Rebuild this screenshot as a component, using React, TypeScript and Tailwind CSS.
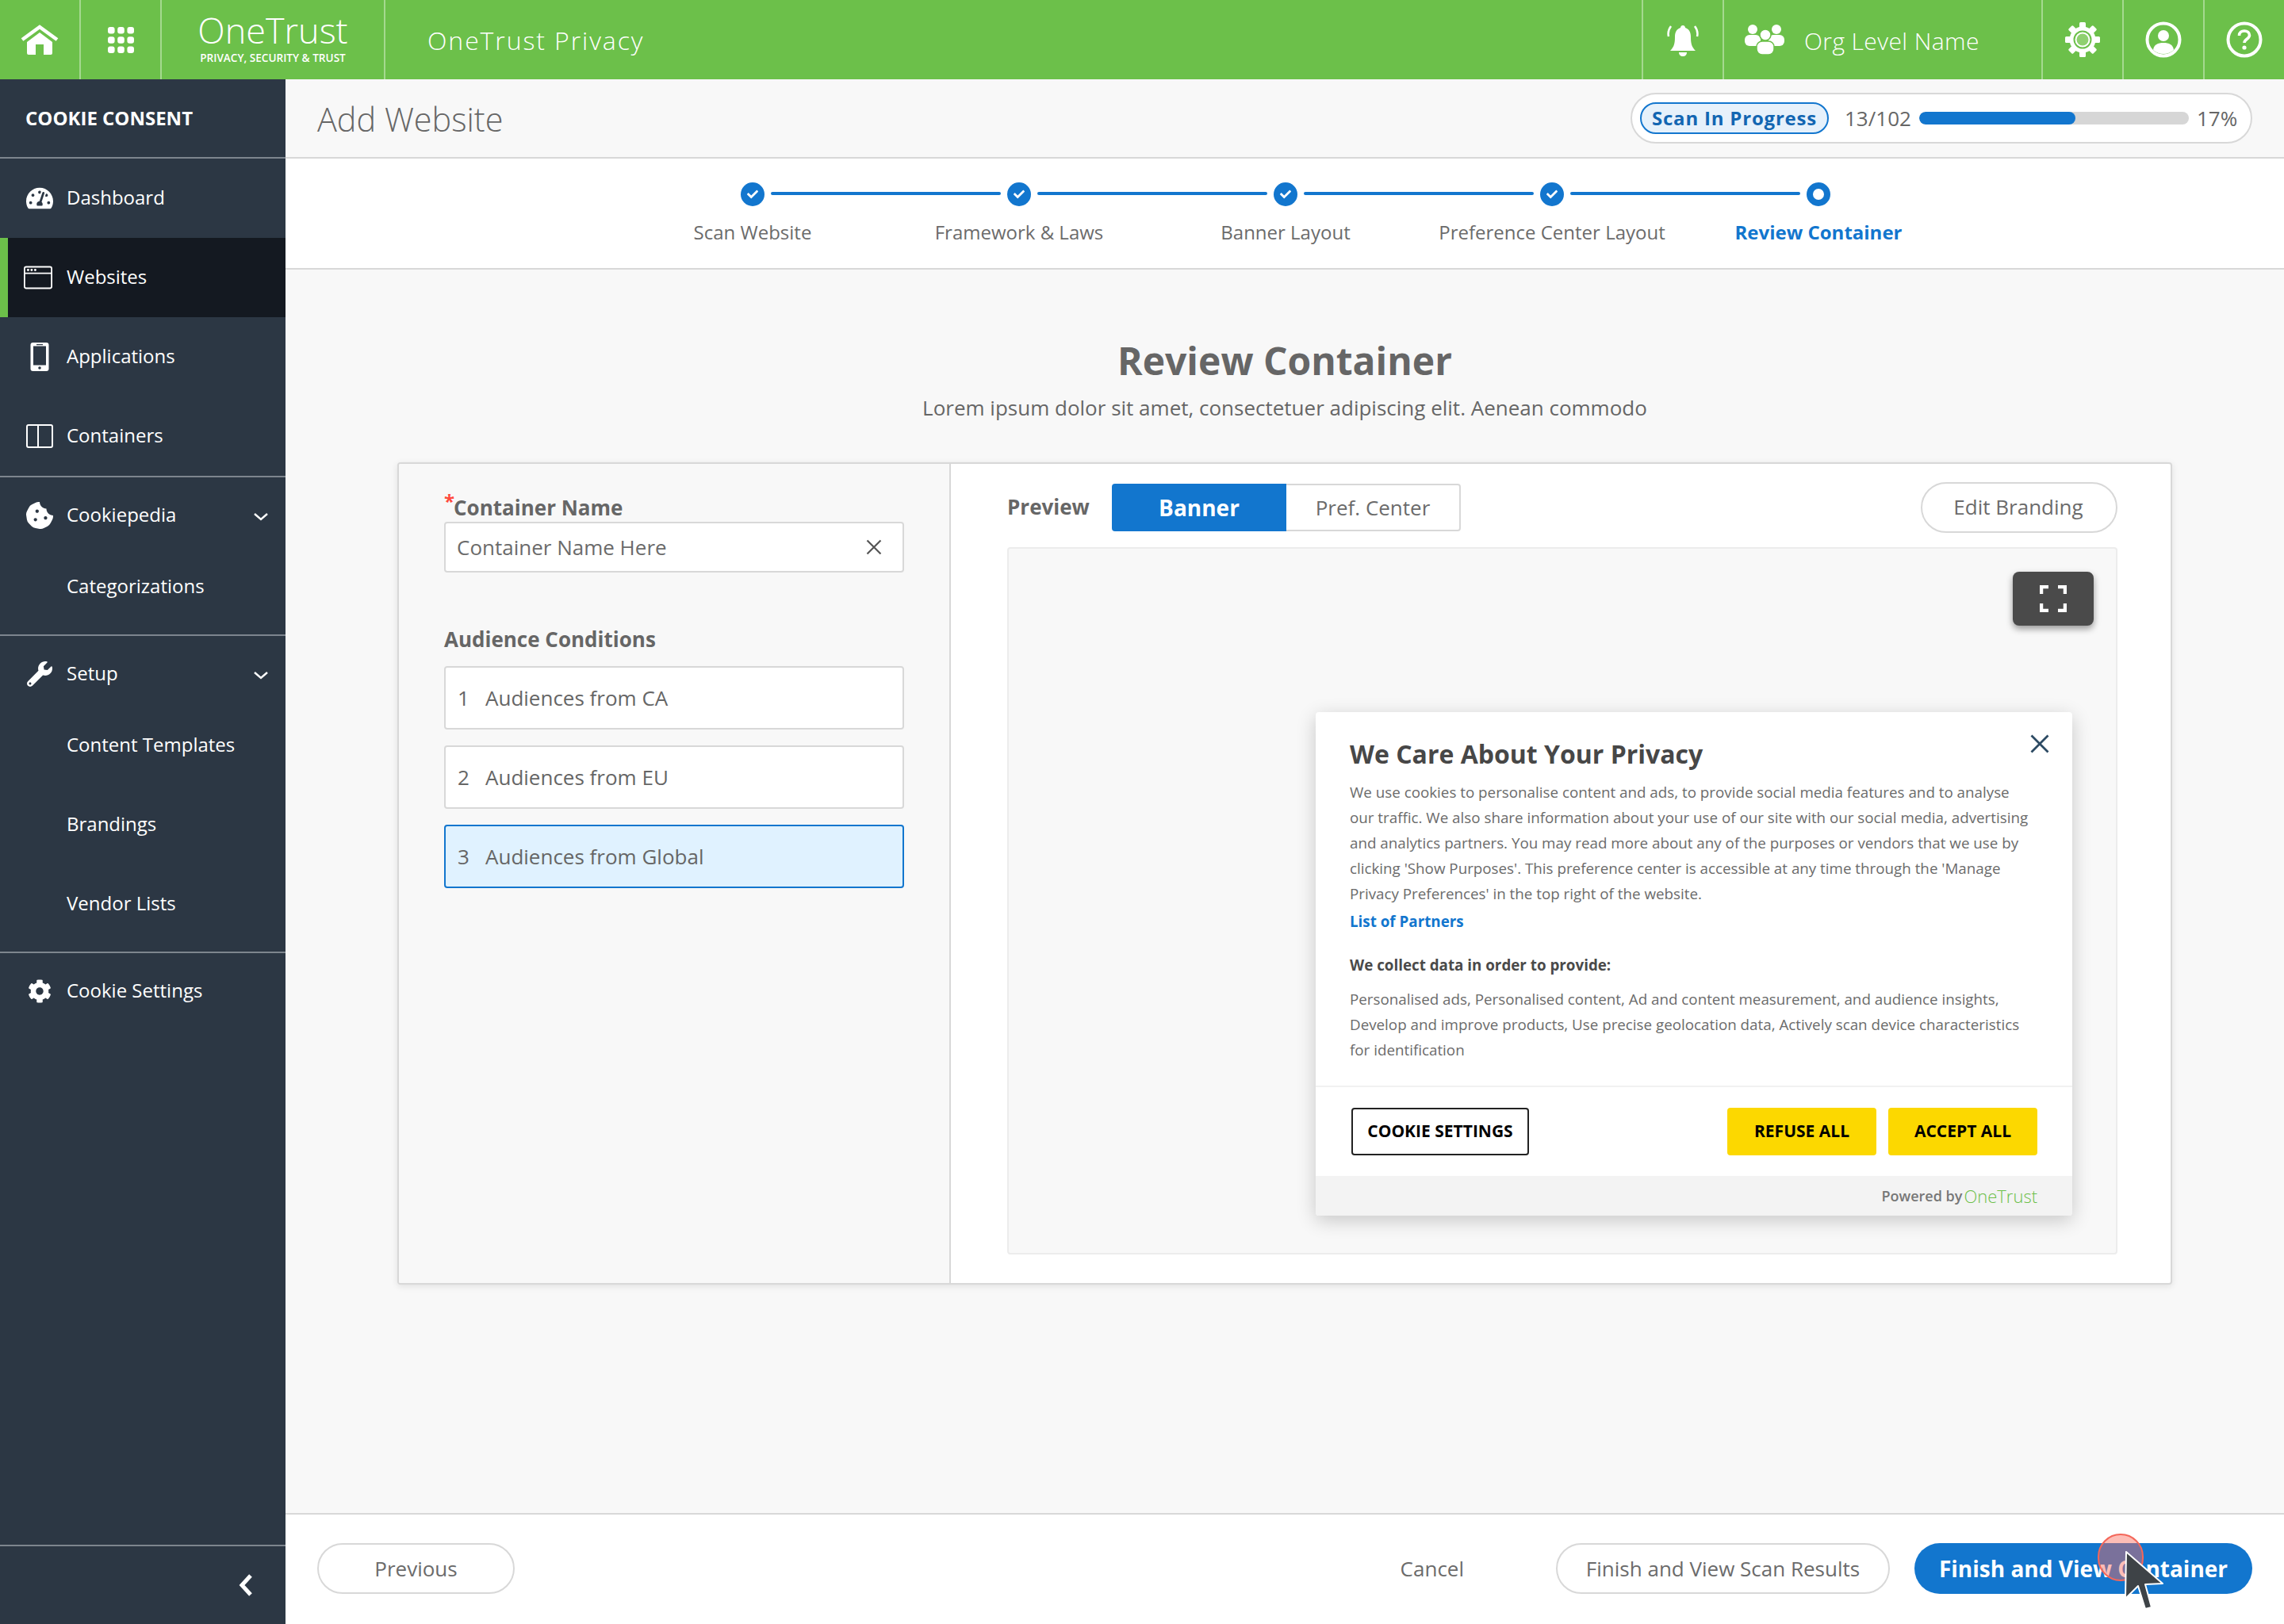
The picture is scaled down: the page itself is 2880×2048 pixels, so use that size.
import React from "react";
import { FaTachometerAlt, FaCookieBite, FaWrench, FaCog, FaCheck } from "react-icons/fa";

const Div = () => <div className="w-[2px] h-full bg-[#a5d98f] shrink-0" />;

function NavRow({ icon, label, active, chevron, first }: { icon?: React.ReactNode; label: string; active?: boolean; chevron?: boolean; first?: boolean }) {
  return (
    <div className={`flex items-center relative text-white text-[24px] leading-[32px] ${first ? "h-[88px] pt-[8px] pb-[2px]" : "h-[100px] pb-[2px]"} ${active ? "bg-[#141921] border-l-[10px] border-[#6cc04a] pl-[74px]" : "pl-[84px]"}`}>
      {icon && <span className={`absolute top-1/2 -translate-y-1/2 flex items-center justify-center w-[36px] ${first ? "mt-[4px]" : ""} ${active ? "left-[20px]" : "left-[32px]"}`}>{icon}</span>}
      <span>{label}</span>
      {chevron && (
        <svg className="absolute right-[21px] top-[44px]" width="20" height="12" viewBox="0 0 20 12"><path d="M2 2l8 7 8-7" fill="none" stroke="#fff" strokeWidth="2.4" /></svg>
      )}
    </div>
  );
}

function Sidebar() {
  return (
    <aside className="w-[360px] shrink-0 bg-[#2c3744] flex flex-col">
      <div className="h-[100px] border-b-2 border-[#7d858e] flex items-center pl-[32px] text-white font-bold text-[24px]">COOKIE CONSENT</div>
      <NavRow label="Dashboard" icon={<FaTachometerAlt size={34} color="#fff" />} />
      <NavRow label="Websites" active icon={
        <svg width="40" height="32" viewBox="0 0 40 32" fill="none"><rect x="1" y="1" width="38" height="30" rx="2.5" stroke="#fff" strokeWidth="2" /><path d="M1 10h38" stroke="#fff" strokeWidth="2" /><circle cx="6" cy="5.5" r="1.6" fill="#fff" /><circle cx="11" cy="5.5" r="1.6" fill="#fff" /><circle cx="16" cy="5.5" r="1.6" fill="#fff" /></svg>
      } />
      <NavRow label="Applications" icon={
        <svg width="24" height="36" viewBox="0 0 24 36"><rect x="0.500" y="0" width="23" height="36" rx="3" fill="#fff" /><rect x="4" y="4.500" width="16" height="24" fill="#2c3744" /><rect x="8" y="2" width="8" height="1.200" fill="#2c3744" /><circle cx="12" cy="32" r="1.800" fill="#2c3744" /></svg>
      } />
      <NavRow label="Containers" icon={
        <svg width="34" height="30" viewBox="0 0 34 30" fill="none"><rect x="1" y="1" width="32" height="28" rx="2" stroke="#fff" strokeWidth="2" /><path d="M15 1v28" stroke="#fff" strokeWidth="2" /></svg>
      } />
      <div className="border-t-2 border-[#7d858e] pb-[10px]">
        <NavRow first label="Cookiepedia" chevron icon={<FaCookieBite size={34} color="#fff" />} />
        <NavRow label="Categorizations" />
      </div>
      <div className="border-t-2 border-[#7d858e] pb-[10px]">
        <NavRow first label="Setup" chevron icon={<FaWrench size={32} color="#fff" />} />
        <NavRow label="Content Templates" />
        <NavRow label="Brandings" />
        <NavRow label="Vendor Lists" />
      </div>
      <div className="border-t-2 border-[#7d858e]">
        <div className="-mt-[2px]"><NavRow label="Cookie Settings" icon={<FaCog size={30} color="#fff" />} /></div>
      </div>
      <div className="flex-1" />
      <div className="h-[100px] border-t-2 border-[#7d858e] flex items-center justify-end pr-[40px]">
        <svg width="20" height="30" viewBox="0 0 20 30"><path d="M16 3L5 15l11 12" fill="none" stroke="#fff" strokeWidth="5" /></svg>
      </div>
    </aside>
  );
}

function Header() {
  return (
    <header className="h-[100px] bg-[#6cc04a] flex items-stretch text-white shrink-0">
      <div className="w-[100px] flex items-center justify-center">
        <svg width="48" height="38" viewBox="0 0 48 38" fill="none">
          <path d="M2 19L24 3l22 16" stroke="#fff" strokeWidth="4.500" strokeLinejoin="miter" />
          <path d="M8 22L24 10l16 12v14a2 2 0 0 1-2 2h-9V25h-10v13h-9a2 2 0 0 1-2-2z" fill="#fff" />
        </svg>
      </div>
      <Div />
      <div className="w-[100px] flex items-center justify-center">
        <svg width="34" height="34" viewBox="0 0 34 34" fill="#fff">
          {[0, 1, 2].map((r) => [0, 1, 2].map((c) => <rect key={`${r}${c}`} x={1 + c * 12.2} y={1 + r * 12.2} width="8.6" height="8.6" rx="3" />))}
        </svg>
      </div>
      <Div />
      <div className="w-[280px] flex flex-col items-center pt-[12px]">
        <div className="text-[45px] leading-[52px] font-light">OneTrust</div>
        <div className="text-[13.6px] leading-[16px] font-semibold mt-[1px]">PRIVACY, SECURITY &amp; TRUST</div>
      </div>
      <Div />
      <div className="pl-[53px] flex items-center text-[32px] font-light tracking-[1.9px] pt-[2px]">OneTrust Privacy</div>
      <div className="flex-1" />
      <Div />
      <div className="w-[100px] flex items-center justify-center">
        <svg width="42" height="44" viewBox="0 0 42 44" fill="#fff">
          <path d="M21 4c-2 0-3 1.500-3 3-5 1.500-7 6-7 11 0 9-1 13-6 18h32c-5-5-6-9-6-18 0-5-2-9.500-7-11 0-1.500-1-3-3-3z" />
          <path d="M16 38h10c0 3-2 5-5 5s-5-2-5-5z" />
          <path d="M6 5C3 9 2 14 3 18M36 5c3 4 4 9 3 13" fill="none" stroke="#fff" strokeWidth="2.5" />
        </svg>
      </div>
      <Div />
      <div className="w-[400px] flex items-center pl-[25px]">
        <svg width="52" height="38" viewBox="0 0 52 38" fill="#fff">
          <circle cx="11" cy="6" r="6" /><circle cx="41" cy="6" r="6" />
          <rect x="1" y="13" width="20" height="14" rx="6" /><rect x="31" y="13" width="20" height="14" rx="6" />
          <circle cx="27" cy="13" r="7" stroke="#6cc04a" strokeWidth="1.500" />
          <rect x="16" y="21" width="22" height="17" rx="7" stroke="#6cc04a" strokeWidth="1.500" />
        </svg>
        <span className="ml-[24px] text-[30px] font-light tracking-[0.4px] pt-[2px]">Org Level Name</span>
      </div>
      <Div />
      <div className="w-[100px] flex items-center justify-center">
        <svg width="46" height="46" viewBox="0 0 46 46">
          <g fill="#fff">
            {[0, 45, 90, 135].map((a) => <rect key={a} x="19" y="1" width="8" height="44" rx="1.500" transform={`rotate(${a} 23 23)`} />)}
            <circle cx="23" cy="23" r="16.500" />
          </g>
          <circle cx="23" cy="23" r="10.500" fill="none" stroke="#6cc04a" strokeWidth="2" />
          <circle cx="23" cy="23" r="7.500" fill="#8fd070" />
        </svg>
      </div>
      <Div />
      <div className="w-[100px] flex items-center justify-center">
        <svg width="46" height="46" viewBox="0 0 46 46" fill="none">
          <circle cx="23" cy="23" r="20.500" stroke="#fff" strokeWidth="4" />
          <circle cx="23" cy="18" r="7" fill="#fff" />
          <path d="M10 36c1-7 6-9 13-9s12 2 13 9c-4 3.500-8 5-13 5s-9-1.500-13-5z" fill="#fff" />
        </svg>
      </div>
      <Div />
      <div className="w-[100px] flex items-center justify-center">
        <svg width="46" height="46" viewBox="0 0 46 46" fill="none">
          <circle cx="23" cy="23" r="20.500" stroke="#fff" strokeWidth="4" />
          <path d="M16.500 18c0-4 3-6 6.500-6s6.500 2.200 6.500 5.500c0 4.500-6.500 5-6.500 9.500" stroke="#fff" strokeWidth="3.600" />
          <circle cx="23" cy="33" r="2.600" fill="#fff" />
        </svg>
      </div>
    </header>
  );
}

const steps = ["Scan Website", "Framework & Laws", "Banner Layout", "Preference Center Layout", "Review Container"];

function Stepper() {
  return (
    <div className="h-[140px] bg-white border-b-2 border-[#d8d8d8] shrink-0 pl-[421px]">
      <div className="flex items-center pl-[153px] pt-[30px]">
        {steps.map((s, i) => (
          <React.Fragment key={s}>
            {i < 4 ? (
              <span className="w-[30px] h-[30px] rounded-full bg-[#1276ce] flex items-center justify-center shrink-0"><FaCheck size={14} color="#fff" /></span>
            ) : (
              <span className="w-[30px] h-[30px] rounded-full border-[8px] border-[#1276ce] bg-white shrink-0" />
            )}
            {i < 4 && <span className="w-[290px] h-[4px] rounded-full bg-[#1276ce] mx-[8px] -mt-[2px] shrink-0" />}
          </React.Fragment>
        ))}
      </div>
      <div className="grid grid-cols-[repeat(5,336px)] mt-[17px]">
        {steps.map((s, i) => (
          <div key={s} className={`text-center text-[24px] leading-[32px] ${i === 4 ? "font-bold text-[#1276ce]" : "text-[#6b6b6b]"}`}>{s}</div>
        ))}
      </div>
    </div>
  );
}

function Audience({ n, label, active }: { n: number; label: string; active?: boolean }) {
  return (
    <div className={`h-[80px] rounded-[4px] border-2 flex items-center pl-[15px] text-[26px] text-[#666] ${active ? "bg-[#e0f2ff] border-[#1276ce]" : "bg-white border-[#d8d8d8]"}`}>
      <span className="w-[35px]">{n}</span>
      <span>{label}</span>
    </div>
  );
}

function CookieBanner() {
  return (
    <div className="absolute left-[387px] top-[206px] w-[954px] h-[635px] bg-white rounded-[4px] shadow-[0_6px_24px_rgba(0,0,0,0.2)] flex flex-col overflow-hidden">
      <div className="relative flex-1 px-[43px] pt-[32px] text-[#6b6b6b] text-[18.8px] leading-[32px]">
        <div className="text-[32px] leading-[42px] font-bold text-[#474747]">We Care About Your Privacy</div>
        <svg className="absolute left-[901px] top-[28px]" width="24" height="24" viewBox="0 0 24 24"><path d="M1.500 1.500l21 21M22.500 1.500l-21 21" stroke="#2c4a63" strokeWidth="2.800" /></svg>
        <p className="mt-[11px] w-[860px]">We use cookies to personalise content and ads, to provide social media features and to analyse our traffic. We also share information about your use of our site with our social media, advertising and analytics partners. You may read more about any of the purposes or vendors that we use by clicking 'Show Purposes'. This preference center is accessible at any time through the 'Manage Privacy Preferences' in the top right of the website.</p>
        <div className="font-bold text-[#1276ce] mt-[3px]">List of Partners</div>
        <div className="font-bold text-[#4a4a4a] mt-[23px]">We collect data in order to provide:</div>
        <p className="mt-[11px] w-[860px]">Personalised ads, Personalised content, Ad and content measurement, and audience insights, Develop and improve products, Use precise geolocation data, Actively scan device characteristics for identification</p>
      </div>
      <div className="h-[114px] border-t-2 border-[#f1f1f1] flex items-center pl-[45px] pr-[44px] shrink-0 text-[21px] font-bold text-black">
        <div className="w-[224px] h-[60px] border-2 border-[#222] rounded-[4px] flex items-center justify-center">COOKIE SETTINGS</div>
        <div className="flex-1" />
        <div className="w-[188px] h-[60px] bg-[#fcd800] rounded-[4px] flex items-center justify-center">REFUSE ALL</div>
        <div className="w-[188px] h-[60px] bg-[#fcd800] rounded-[4px] flex items-center justify-center ml-[15px]">ACCEPT ALL</div>
      </div>
      <div className="h-[50px] bg-[#f3f3f3] flex items-center justify-end pr-[44px] shrink-0">
        <span className="text-[18px] font-semibold text-[#777]">Powered by</span>
        <span className="text-[22px] font-light text-[#6cc04a] ml-[2px]">OneTrust</span>
      </div>
    </div>
  );
}

function Card() {
  return (
    <div className="mx-[141px] h-[1037px] border-2 border-[#d8d8d8] rounded-[4px] bg-white shadow-[0_2px_8px_rgba(0,0,0,0.1)] flex overflow-hidden">
      <div className="w-[696px] bg-[#f8f8f8] border-r-2 border-[#d8d8d8] shrink-0 pl-[57px] pt-[39px]">
        <div className="relative h-[32px] leading-[32px] text-[26px] font-bold text-[#666] pl-[12px]">
          <span className="absolute left-0 -top-[8px] text-[#ff4a3d] text-[24px]">*</span>
          Container Name
        </div>
        <div className="w-[580px] h-[64px] rounded-[4px] border-2 border-[#d8d8d8] bg-white flex items-center justify-between pl-[14px] pr-[26px] text-[26px] text-[#6b6b6b] mt-[2px]">
          <span>Container Name Here</span>
          <svg width="20" height="20" viewBox="0 0 20 20"><path d="M1.500 1.500l17 17M18.500 1.500l-17 17" stroke="#555" strokeWidth="2.200" /></svg>
        </div>
        <div className="text-[26px] leading-[36px] font-bold text-[#666] mt-[66px]">Audience Conditions</div>
        <div className="w-[580px] flex flex-col gap-[20px] mt-[16px]">
          <Audience n={1} label="Audiences from CA" />
          <Audience n={2} label="Audiences from EU" />
          <Audience n={3} label="Audiences from Global" active />
        </div>
      </div>
      <div className="flex-1 pl-[71px] pr-[67px] pt-[23px]">
        <div className="flex items-center h-[64px]">
          <span className="w-[132px] text-[26px] font-bold text-[#666] pb-[2px]">Preview</span>
          <div className="flex h-[60px] w-[440px] rounded-[4px]">
            <div className="w-[220px] bg-[#1276ce] text-white text-[28px] font-bold rounded-l-[4px] flex items-center justify-center">Banner</div>
            <div className="w-[220px] bg-white text-[26px] text-[#6b6b6b] border-2 border-l-0 border-[#d8d8d8] rounded-r-[4px] flex items-center justify-center">Pref. Center</div>
          </div>
          <div className="flex-1" />
          <div className="w-[248px] h-[64px] rounded-full border-2 border-[#d8d8d8] flex items-center justify-center text-[26px] text-[#6b6b6b] pb-[2px] pr-[2px]">Edit Branding</div>
        </div>
        <div className="relative mt-[18px] h-[892px] border-2 border-[#ececec] rounded-[4px] bg-[#f8f8f8]">
          <div className="absolute left-[1266px] top-[29px] w-[102px] h-[68px] rounded-[8px] bg-[#4a4a4a] shadow-[0_4px_8px_rgba(0,0,0,0.4)] flex items-center justify-center">
            <svg width="34" height="34" viewBox="0 0 34 34" fill="none" stroke="#fff" strokeWidth="4.500"><path d="M2 11V2h9M23 2h9v9M32 23v9h-9M11 32H2v-9" /></svg>
          </div>
          <CookieBanner />
        </div>
      </div>
    </div>
  );
}

function Footer() {
  return (
    <div className="relative h-[140px] bg-white border-t-2 border-[#d8d8d8] shrink-0 flex items-center pl-[40px] pr-[40px] pb-[2px] text-[26px]">
      <div className="w-[249px] h-[64px] rounded-full border-2 border-[#d8d8d8] flex items-center justify-center text-[#6b6b6b]">Previous</div>
      <div className="flex-1" />
      <div className="text-[#6b6b6b] mr-[116px]">Cancel</div>
      <div className="w-[421px] h-[64px] rounded-full border-2 border-[#d8d8d8] flex items-center justify-center text-[#6b6b6b]">Finish and View Scan Results</div>
      <div className="w-[426px] h-[64px] rounded-full bg-[#1276ce] flex items-center justify-center text-white text-[28px] font-bold ml-[31px]">Finish and View Container</div>
      <div className="absolute left-[2285px] top-[24px] w-[58px] h-[60px] rounded-full bg-[#fa6c5e]/45 border-2 border-[#f4675a]" />
      <svg className="absolute left-[2314px] top-[44px]" width="56" height="78" viewBox="0 0 56 78">
        <path d="M7 3L6 62 22 46 31 75 39 73 31 44 53 43z" fill="#3e4347" stroke="#fff" strokeWidth="2" strokeLinejoin="round" />
      </svg>
    </div>
  );
}

export default function App() {
  return (
    <div className="w-[2880px] h-[2048px] flex flex-col overflow-hidden bg-[#f8f8f8] font-['Open_Sans',sans-serif]">
      <Header />
      <div className="flex flex-1 min-h-0">
        <Sidebar />
        <main className="flex-1 flex flex-col min-w-0">
          <div className="h-[100px] shrink-0 border-b-2 border-[#d8d8d8] flex items-center justify-between pl-[40px] pr-[40px]">
            <div className="text-[41.4px] text-[#666] font-light pt-[2px]">Add Website</div>
            <div className="w-[784px] h-[64px] rounded-full border-2 border-[#d8d8d8] bg-white flex items-center pl-[10px] text-[26px] text-[#666]">
              <span className="w-[238px] h-[40px] rounded-full border-2 border-[#1276ce] bg-[#e6f1fb] text-[#1266b2] font-bold text-[24px] flex items-center justify-center tracking-[0.8px]">Scan In Progress</span>
              <span className="ml-[20px] w-[94px]">13/102</span>
              <span className="w-[340px] h-[16px] rounded-full bg-[#d6d6d6] overflow-hidden"><span className="block h-full w-[197px] rounded-full bg-[#1276ce]" /></span>
              <span className="ml-[10px]">17%</span>
            </div>
          </div>
          <Stepper />
          <div className="flex-1 min-h-0 pt-[87px]">
            <div className="text-center text-[48px] leading-[56px] font-bold text-[#666]">Review Container</div>
            <div className="text-center text-[26px] leading-[36px] text-[#666] mt-[13px]">Lorem ipsum dolor sit amet, consectetuer adipiscing elit. Aenean commodo</div>
            <div className="mt-[51px]"><Card /></div>
          </div>
          <Footer />
        </main>
      </div>
    </div>
  );
}
